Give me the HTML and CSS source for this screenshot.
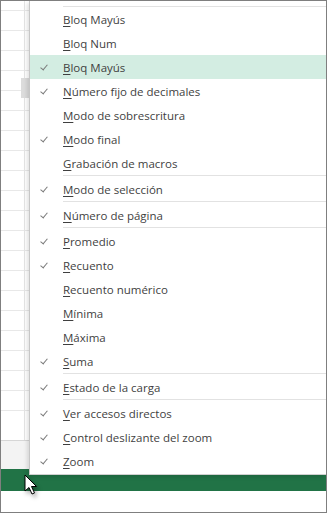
FILE: index.html
```html
<!DOCTYPE html>
<html lang="es">
<head>
    <meta charset="UTF-8">
    <title>Barra de estado</title>
    <link rel="stylesheet" href="styles.css">
</head>
<body>
    <div class="window">
        <!--hoja de fondo-->
        <div class="sheet">
            <div class="grid">
                <div class="rowhead"></div>
            </div>
            <div class="tabs"></div>
            <div class="status"></div>
            <div class="foot"></div>
        </div>

        <!--menu contextual de la barra de estado-->
        <div class="menu">
            <div class="sep first"></div>
            <div class="item"><span class="check"></span><span class="label"><u>B</u>loq Mayús</span></div>
            <div class="item"><span class="check"></span><span class="label"><u>B</u>loq Num</span></div>
            <div class="item hover"><span class="check on"></span><span class="label"><u>B</u>loq Mayús</span></div>
            <div class="item"><span class="check on"></span><span class="label"><u>N</u>úmero fijo de decimales</span></div>
            <div class="item"><span class="check"></span><span class="label"><u>M</u>odo de sobrescritura</span></div>
            <div class="item"><span class="check on"></span><span class="label"><u>M</u>odo final</span></div>
            <div class="item"><span class="check"></span><span class="label"><u>G</u>rabación de macros</span></div>
            <div class="sep"></div>
            <div class="item"><span class="check on"></span><span class="label"><u>M</u>odo de selección</span></div>
            <div class="sep"></div>
            <div class="item"><span class="check on"></span><span class="label"><u>N</u>úmero de página</span></div>
            <div class="sep"></div>
            <div class="item"><span class="check on"></span><span class="label"><u>P</u>romedio</span></div>
            <div class="item"><span class="check on"></span><span class="label"><u>R</u>ecuento</span></div>
            <div class="item"><span class="check"></span><span class="label"><u>R</u>ecuento numérico</span></div>
            <div class="item"><span class="check"></span><span class="label"><u>M</u>ínima</span></div>
            <div class="item"><span class="check"></span><span class="label"><u>M</u>áxima</span></div>
            <div class="item"><span class="check on"></span><span class="label"><u>S</u>uma</span></div>
            <div class="sep"></div>
            <div class="item"><span class="check on"></span><span class="label"><u>E</u>stado de la carga</span></div>
            <div class="sep"></div>
            <div class="item"><span class="check on"></span><span class="label"><u>V</u>er accesos directos</span></div>
            <div class="item"><span class="check on"></span><span class="label"><u>C</u>ontrol deslizante del zoom</span></div>
            <div class="item"><span class="check on"></span><span class="label"><u>Z</u>oom</span></div>
        </div>

        <!--puntero del raton-->
        <svg class="cursor" width="14" height="22" viewBox="0 0 14 22">
            <path d="M1 1 L1 17 L5 13.5 L8 20 L10.5 19 L7.5 12.5 L12.5 12.5 Z" fill="#fff" stroke="#000" stroke-width="1" stroke-linejoin="round"/>
        </svg>
    </div>
</body>
</html>
```

FILE: styles.css
```css
body {
    margin: 0;
    background: #fff;
}

.window {
    position: relative;
    width: 327px;
    height: 513px;
    box-sizing: border-box;
    border: 1px solid #7f7f7f;
    overflow: hidden;
    font-family: "Open Sans", "Noto Sans", sans-serif;
}

/*hoja de fondo*/
.sheet {
    display: flex;
    flex-direction: column;
    height: 100%;
}

.grid {
    height: 439px;
    box-sizing: border-box;
    flex: none;
    background-color: #fff;
    background-image:
        linear-gradient(to right, transparent 23px, #e4e4e4 23px, #e4e4e4 24px, transparent 24px),
        repeating-linear-gradient(to bottom, transparent 0, transparent 19px, #e8e8e8 19px, #e8e8e8 20px);
    background-position: 0 -10px, 0 -10px;
    padding-top: 77px;
}

.rowhead {
    width: 8px;
    height: 20px;
    margin-left: 20px;
    background: #dcdcdc;
}

.tabs {
    height: 29px;
    flex: none;
    box-sizing: border-box;
    background: #f3f3f3;
    border-top: 1px solid #d6d6d6;
}

.status {
    height: 22px;
    flex: none;
    background: #217346;
}

.foot {
    flex: 1;
    background: #fff;
}

/*menu*/
.menu {
    position: absolute;
    left: 28px;
    top: 0;
    right: 0;
    background: #fff;
    border-left: 1px solid #c6c6c6;
    border-bottom: 1px solid #d0d0d0;
    box-shadow: -2px 2px 4px rgba(0, 0, 0, 0.12);
    padding: 5px 0 1px;
    font-size: 11.5px;
    color: #3f3f3f;
}

.item {
    display: flex;
    align-items: center;
    height: 24px;
}

.item.hover {
    background: #d3ede2;
}

.check {
    width: 33px;
    height: 24px;
    flex: none;
    position: relative;
}

.check.on:after {
    content: '';
    position: absolute;
    left: 12px;
    top: 8px;
    width: 3px;
    height: 6px;
    border-right: 1.3px solid #7a7a7a;
    border-bottom: 1.3px solid #7a7a7a;
    transform: rotate(40deg);
}

.label u {
    text-decoration-thickness: 1px;
    text-underline-offset: 2px;
}

.sep {
    height: 1px;
    margin: 0 0 1px 33px;
    background: #e2e2e2;
}

.sep.first {
    margin-bottom: 0;
}

.cursor {
    position: absolute;
    left: 23px;
    top: 473px;
    filter: drop-shadow(2px 3px 2px rgba(0, 0, 0, 0.35));
}
```
